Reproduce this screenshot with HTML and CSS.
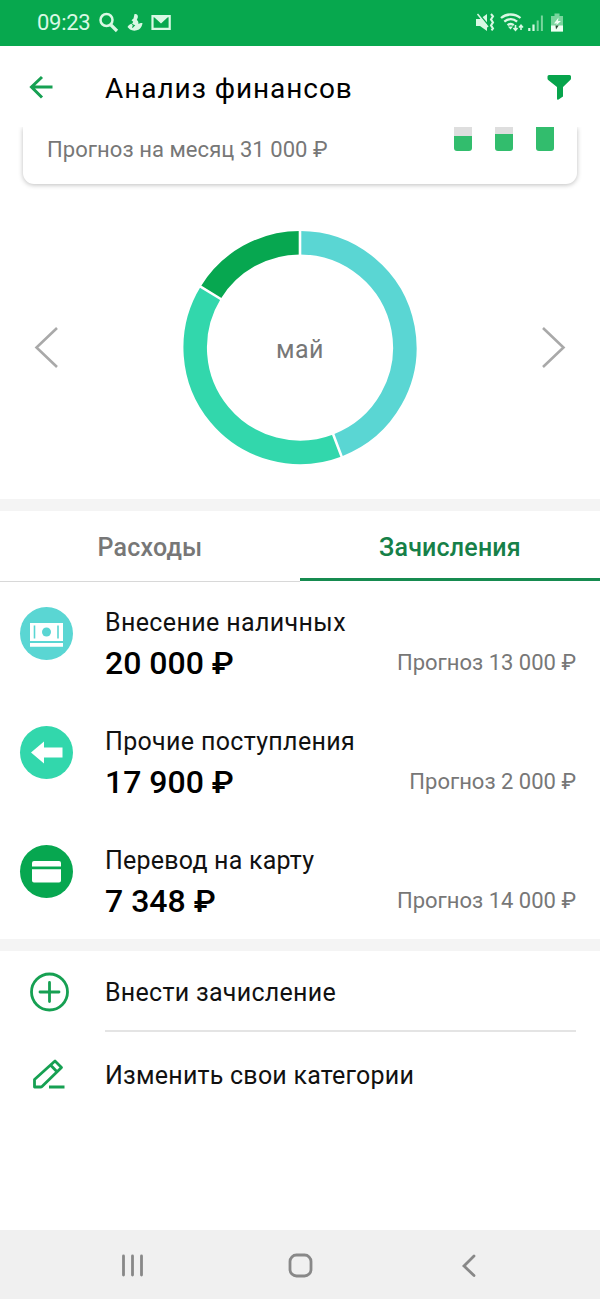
FILE: index.html
```html
<!DOCTYPE html>
<html lang="ru">
<head>
<meta charset="utf-8">
<title>Анализ финансов</title>
<link rel="stylesheet" href="styles.css">
</head>
<body>
<div class="screen">
  <div class="status">
    <span class="clock">09:23</span>
    <svg class="status-left" width="76" height="24" viewBox="98 11 76 24" fill="none" stroke="#d9f8e4">
      <circle cx="106.500" cy="20" r="6" stroke-width="2.500"/>
      <path d="M111 25l6 6" stroke-width="3.200"/>
      <path d="M134.500 14c2.300-.5 3.800 1 3.300 3.500l-1 2.500c1.500 1 1.800 2.300 1.500 3.800 1.500.2 2.200-1 4.200-.6-.3 2.500-1.500 4.500-3.500 6.300-3 1.500-6.500 1.500-9 0l-2.500-2.500c1-2 2.500-3 4.700-3.200l1-2-1.700-1.500 2-1.800z" fill="#d9f8e4" stroke="none"/>
      <path d="M132 24.500l2.300 1-2 2" stroke="#07a84e" stroke-width="1.100"/>
      <path d="M152.500 16.200h17.200v12.600h-17.200z" stroke-width="2.200"/>
      <path d="M154 17l7 6.500 7-6.500z" fill="#d9f8e4" stroke="none"/>
    </svg>
    <svg class="status-right" width="92" height="24" viewBox="474 11 92 24" fill="none" stroke="#d9f8e4">
      <path d="M476 19h4l7-5v17l-7-5h-4z" fill="#d9f8e4" stroke="none"/>
      <path d="M479 14l10 12" stroke="#07a84e" stroke-width="1.500"/>
      <path d="M477.500 14l10.500 13" stroke-width="1.500"/>
      <path d="M491 14l2 2.400-2 3 2 3-2 3 2 3-1.500 2" stroke-width="2"/>
      <path d="M501 18c5.500-4.700 14-4.700 19.500 0M504.300 21.700c4-3.300 9-3.300 12.800 0M507.500 25.200c2-1.500 4.500-1.500 6.300 0" stroke-width="2.300"/>
      <path d="M508 26.500h5l-2.500 3z" fill="#d9f8e4" stroke="none"/>
      <path d="M515.500 25v5M513.500 28l2 2.200 2-2.200M521 30v-5M519 27.500l2-2.200 2 2.200" stroke-width="1.600"/>
      <path d="M529.300 28v3M533.500 24.500V31" stroke-width="2.200"/>
      <path d="M537.700 20.500V31M541.900 15.500V31" stroke="#79d59d" stroke-width="2"/>
      <path d="M551 16h3.500v-2.500h5V16h3.500v15.500h-12z" fill="#79d59d" stroke="none"/>
      <path d="M551 25.500h12v6h-12z" fill="#effff3" stroke="none"/>
      <path d="M558.500 17.500l-4.500 6h3l-1 2 5-4.500h-3z" fill="#effff3" stroke="none"/>
      <path d="M555.500 25.500h3.200l-2.700 4z" fill="#284c32" stroke="none"/>
    </svg>
  </div>
  <header class="header">
    <svg class="back" width="26" height="24" viewBox="28 75 26 24" fill="none" stroke="#16a052" stroke-width="3"><path d="M52.500 87H32M42 77L31.500 87 42 97.500"/></svg>
    <h1 class="title">Анализ финансов</h1>
    <svg class="filter" width="26" height="26" viewBox="546 74 26 26"><path d="M549 75h20.500q1.500 0 1.500 1.500v2q0 1-1 1.800L563 87v9.500l-4.500 3q-1.500.7-1.500-1V87l-8.500-6.700q-1-.8-1-1.800v-2q0-1.500 1.500-1.500z" fill="#07a44c"/></svg>
  </header>
  <div class="clip">
    <div class="card">
      <span class="forecast-month">Прогноз на месяц 31 000 ₽</span>
      <div class="bars"><i class="bar low"></i><i class="bar mid"></i><i class="bar full"></i></div>
    </div>
  </div>
  <div class="chart">
    <svg width="26" height="44" viewBox="0 0 26 44" fill="none" stroke="#a9a9a9" stroke-width="2.600"><path d="M23 2L2.500 21.500 23 41"/></svg>
    <div class="donut">
      <svg width="240" height="240" viewBox="-120 -119.500 240 240" fill="none" stroke-width="23.500">
        <path d="M0-104.800A104.800 104.800 0 0 1 37.400 97.900" stroke="#5ad6d3"/>
        <path d="M37.400 97.900A104.800 104.800 0 0 1-89.400-54.700" stroke="#32d7ac"/>
        <path d="M-89.400-54.700A104.800 104.800 0 0 1 0-104.800" stroke="#07a750"/>
        <path d="M0-91V-119M32.500 85L42.400 111.100M-77.600-47.500L-101.500-62.200" stroke="#fff" stroke-width="2.600"/>
      </svg>
      <span class="month">май</span>
    </div>
    <svg width="26" height="44" viewBox="0 0 26 44" fill="none" stroke="#a9a9a9" stroke-width="2.600"><path d="M3 2L23.500 21.500 3 41"/></svg>
  </div>
  <div class="divider"></div>
  <nav class="tabs"><div class="tab">Расходы</div><div class="tab active">Зачисления</div></nav>
  <main class="list">
    <section class="row">
      <svg class="badge" width="54" height="54" viewBox="-27.500 -27.500 54 54"><circle r="26.500" fill="#5ad6d3"/><path d="M-16.500-10.500h33V7.500h-33zM-16.500 9.500h33v3.700h-33z" fill="#fff"/><circle cy="-1.500" r="4.500" fill="#5ad6d3"/><path d="M-12-8V5M11.500-8V5" stroke="#5ad6d3" stroke-width="1.600"/></svg>
      <div class="info"><div class="name n1">Внесение наличных</div><div class="sum"><b class="amount">20 000 ₽</b><span class="forecast">Прогноз 13 000 ₽</span></div></div>
    </section>
    <section class="row">
      <svg class="badge" width="54" height="54" viewBox="-27.500 -27.500 54 54"><circle r="26.500" fill="#32d7ac"/><path d="M-15.500 0L-2.500-11v6h18.500V5H-2.500v6z" fill="#fff"/></svg>
      <div class="info"><div class="name n2">Прочие поступления</div><div class="sum"><b class="amount">17 900 ₽</b><span class="forecast">Прогноз 2 000 ₽</span></div></div>
    </section>
    <section class="row">
      <svg class="badge" width="54" height="54" viewBox="-27.500 -27.500 54 54"><circle r="26.500" fill="#07a750"/><path d="M-12.500-10.500h25q2 0 2 2v3.500h-29v-3.500q0-2 2-2zM-14.500-2.200h29V9q0 2-2 2h-25q-2 0-2-2z" fill="#fff"/></svg>
      <div class="info"><div class="name n3">Перевод на карту</div><div class="sum"><b class="amount">7 348 ₽</b><span class="forecast">Прогноз 14 000 ₽</span></div></div>
    </section>
  </main>
  <div class="divider"></div>
  <div class="actions">
    <div class="action">
      <svg width="42" height="42" viewBox="-21.500 -21 42 42" fill="none" stroke="#16a052" stroke-width="2.800"><circle r="18"/><path d="M-9.500 0h19M0-9.500v19" stroke-linecap="round"/></svg>
      <span class="act1">Внести зачисление</span>
    </div>
    <div class="action last">
      <svg width="42" height="42" viewBox="28 1053 42 42" fill="none" stroke="#16a052" stroke-width="2.800" stroke-linejoin="round"><path d="M34.500 1087v-7.500L55 1061l6.500 6.500L42 1086.500q-.5.500-1.500.5zM50.500 1065l6.500 6.800M49 1087h15.500"/></svg>
      <span class="act2">Изменить свои категории</span>
    </div>
  </div>
  <div class="android">
    <svg width="380" height="30" viewBox="110 1251 380 30" fill="none" stroke="#888" stroke-width="2.800" stroke-linecap="round"><path d="M123.500 1256v19M132.500 1256v19M141.500 1256v19M474 1256l-10 10 10 9.500"/><rect x="290" y="1255" width="21" height="21" rx="6.500"/></svg>
  </div>
</div>
</body>
</html>
```
FILE: styles.css
```css
* { box-sizing: border-box; }
body { margin: 0; background: #fff; font-family: Roboto, "Liberation Sans", sans-serif; color: #111; }
.screen { width: 600px; height: 1299px; display: flex; flex-direction: column; overflow: hidden; }
.screen svg { display: block; flex: none; }
.status { height: 46px; background: #07a84e; display: flex; align-items: center; padding: 0 34px 0 37px; color: #d9f8e4; }
.clock { width: 61px; font-size: 22px; line-height: 26px; white-space: nowrap; letter-spacing: -.3px; }
.status-right { margin-left: auto; }
.header { height: 81px; display: flex; align-items: center; padding: 1px 28px 0; }
.title { margin: 0 0 0 51px; padding-top: 3px; font-size: 28px; font-weight: 400; line-height: 34px; color: #000; white-space: nowrap; letter-spacing: .93px; }
.filter { margin-left: auto; }
.clip { height: 73px; overflow: hidden; padding: 0 23px; }
.card { height: 57px; border-radius: 0 0 11px 11px; box-shadow: 0 1px 5px rgba(0,0,0,.26); display: flex; justify-content: space-between; padding: 0 23px 0 24px; }
.forecast-month { padding-top: 9px; line-height: 28px; font-size: 22px; letter-spacing: .06px; color: #777; white-space: nowrap; }
.bars { display: flex; gap: 23px; }
.bar { width: 18px; height: 24px; border-radius: 0 0 3px 3px; background: #32bd6d; }
.low { background: linear-gradient(#dedede 9px, #32bd6d 9px); }
.mid { background: linear-gradient(#dedede 7px, #32bd6d 7px); }
.chart { height: 299px; display: flex; justify-content: space-between; align-items: center; padding: 0 34px 4px; }
.donut { display: grid; place-items: center; }
.donut > * { grid-area: 1 / 1; }
.month { padding-top: 3px; font-size: 25px; color: #777; letter-spacing: .4px; }
.divider { height: 12px; flex: none; background: #f4f4f4; }
.tabs { height: 71px; display: flex; flex: none; }
.tab { flex: 1; display: flex; align-items: center; justify-content: center; border-bottom: 1px solid #d8d8d8; font-size: 25px; font-weight: 500; letter-spacing: .2px; color: #777; padding-top: 3px; }
.active { border-bottom: 3px solid #168b50; margin-bottom: 1px; color: #168048; padding-top: 6px; }
.list { height: 357px; flex: none; }
.row { height: 119px; display: flex; padding: 24px 24px 0 19px; }
.info { flex: 1; padding-left: 32px; }
.name { padding-top: 2px; line-height: 30px; font-size: 25px; color: #111; }
.n1 { letter-spacing: .37px; }
.n2 { letter-spacing: .33px; }
.n3 { letter-spacing: .22px; }
.sum { display: flex; justify-content: space-between; align-items: center; line-height: 40px; margin-top: 5px; }
.amount { font-size: 32px; font-weight: 500; color: #000; }
.forecast { font-size: 22px; color: #777; }
.actions { height: 279px; flex: none; }
.action { display: flex; align-items: center; height: 82px; padding-left: 28px; font-size: 25px; color: #111; }
.action span { margin-left: 35px; flex: 1; height: 80px; line-height: 80px; margin-right: 24px; border-bottom: 2px solid #e4e4e4; }
.action .act1 { letter-spacing: .28px; line-height: 81px; }
.action .act2 { border: 0; letter-spacing: .23px; line-height: 84px; }
.android { height: 69px; flex: none; background: #f0f0f0; display: flex; align-items: center; justify-content: center; padding-top: 2px; }
```
